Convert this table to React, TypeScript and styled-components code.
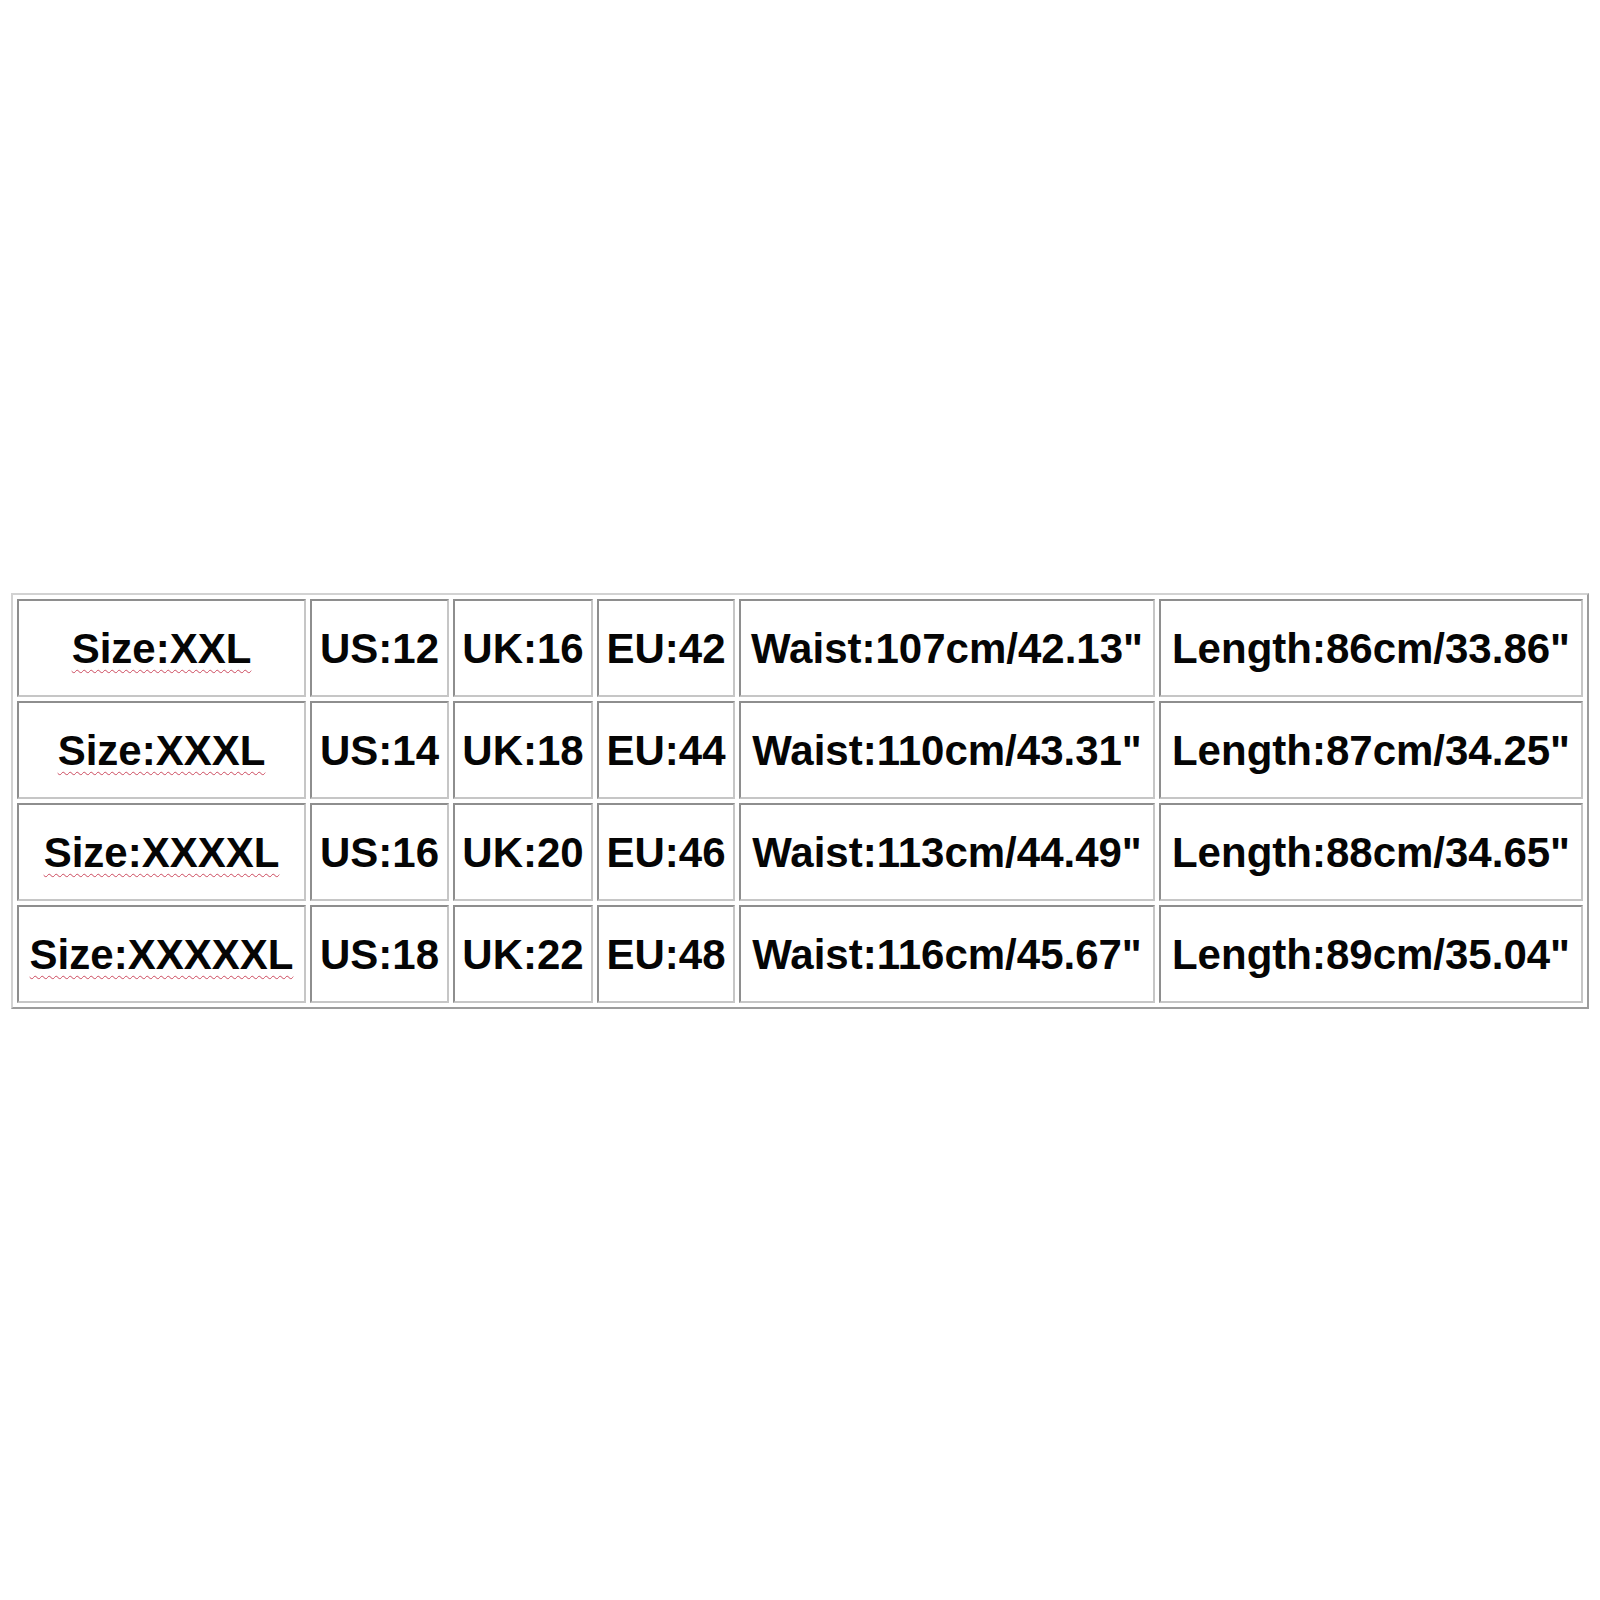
import { FC } from "react";
import styled, { createGlobalStyle } from "styled-components";

const rows = [
	{ size: "XXL", us: 12, uk: 16, eu: 42, waist: "107cm/42.13\"", length: "86cm/33.86\"" },
	{ size: "XXXL", us: 14, uk: 18, eu: 44, waist: "110cm/43.31\"", length: "87cm/34.25\"" },
	{ size: "XXXXL", us: 16, uk: 20, eu: 46, waist: "113cm/44.49\"", length: "88cm/34.65\"" },
	{ size: "XXXXXL", us: 18, uk: 22, eu: 48, waist: "116cm/45.67\"", length: "89cm/35.04\"" },
];

const colWidths = [289, 139, 140, 138, 416, 424];

const App: FC = () => (
	<Page>
		<GlobalStyle />
		<SizeTable>
			<colgroup>
				{colWidths.map((w, i) => (
					<col key={i} style={{ width: w }} />
				))}
			</colgroup>
			<tbody>
				{rows.map((r) => (
					<tr key={r.size}>
						<Cell>
							<Misspelled>Size:{r.size}</Misspelled>
						</Cell>
						<Cell>US:{r.us}</Cell>
						<Cell>UK:{r.uk}</Cell>
						<Cell>EU:{r.eu}</Cell>
						<Cell>Waist:{r.waist}</Cell>
						<Cell>Length:{r.length}</Cell>
					</tr>
				))}
			</tbody>
		</SizeTable>
	</Page>
);

export default App;

const GlobalStyle = createGlobalStyle`
	html, body {
		margin: 0;
		padding: 0;
		background: #fff;
	}
	* {
		box-sizing: border-box;
	}
`;

const Page = styled.div`
	width: 1600px;
	height: 1600px;
	display: flex;
	align-items: center;
	justify-content: center;
	padding-top: 1px;
`;

const SizeTable = styled.table`
	table-layout: fixed;
	width: 1578px;
	border-collapse: separate;
	border-spacing: 4px;
	border: 2px solid;
	border-color: #d2d2d2 #9c9c9c #9c9c9c #d2d2d2;
	background: #fff;
`;

const Cell = styled.td`
	height: 98px;
	padding: 2px 0 0;
	text-align: center;
	vertical-align: middle;
	white-space: nowrap;
	border: 2px solid;
	border-color: #8e8e8e #c6c6c6 #c6c6c6 #8e8e8e;
	font-family: "Liberation Sans", Arial, sans-serif;
	font-weight: 700;
	font-size: 42px;
	color: #050505;
`;

const Misspelled = styled.span`
	text-decoration-line: underline;
	text-decoration-style: wavy;
	text-decoration-color: #cc4a5e;
	text-decoration-thickness: 1px;
	text-underline-offset: 6px;
`;
